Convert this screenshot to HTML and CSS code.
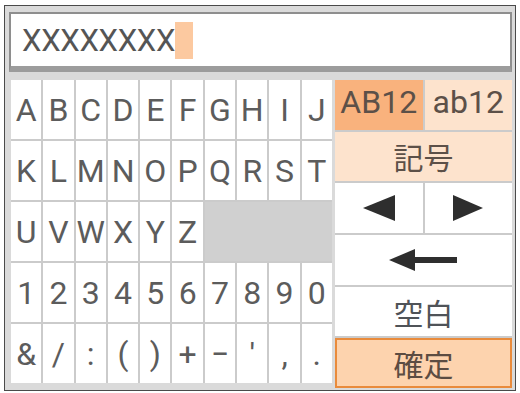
FILE: index.html
```html
<!DOCTYPE html>
<html lang="ja">
<head>
    <meta charset="UTF-8">
    <meta name="viewport" content="width=device-width, initial-scale=1.0">
    <title>文字入力</title>
    <link rel="stylesheet" href="styles.css">
</head>
<body>
<div class="screen">
    <div class="display">
        <span class="entry">XXXXXXXX</span><span class="caret"></span>
    </div>

    <div class="keyboard">
        <div class="letters">
            <div class="key">A</div>
            <div class="key">B</div>
            <div class="key">C</div>
            <div class="key">D</div>
            <div class="key">E</div>
            <div class="key">F</div>
            <div class="key">G</div>
            <div class="key">H</div>
            <div class="key">I</div>
            <div class="key">J</div>

            <div class="key">K</div>
            <div class="key">L</div>
            <div class="key">M</div>
            <div class="key">N</div>
            <div class="key">O</div>
            <div class="key">P</div>
            <div class="key">Q</div>
            <div class="key">R</div>
            <div class="key">S</div>
            <div class="key">T</div>

            <div class="key">U</div>
            <div class="key">V</div>
            <div class="key">W</div>
            <div class="key">X</div>
            <div class="key">Y</div>
            <div class="key">Z</div>
            <div class="key blank"></div>

            <div class="key">1</div>
            <div class="key">2</div>
            <div class="key">3</div>
            <div class="key">4</div>
            <div class="key">5</div>
            <div class="key">6</div>
            <div class="key">7</div>
            <div class="key">8</div>
            <div class="key">9</div>
            <div class="key">0</div>

            <div class="key">&amp;</div>
            <div class="key">/</div>
            <div class="key">:</div>
            <div class="key">(</div>
            <div class="key">)</div>
            <div class="key">+</div>
            <div class="key">&minus;</div>
            <div class="key">'</div>
            <div class="key">,</div>
            <div class="key">.</div>
        </div>

        <div class="side">
            <div class="side-row modes">
                <div class="key mode active">AB12</div>
                <div class="key mode">ab12</div>
            </div>
            <div class="key mode jp">記号</div>
            <div class="side-row">
                <div class="key">
                    <svg width="34" height="28" viewBox="0 0 34 28"><polygon points="1,14 33,1 33,27" fill="#2e2e2e"/></svg>
                </div>
                <div class="key">
                    <svg width="32" height="28" viewBox="0 0 32 28"><polygon points="31,14 1,1 1,27" fill="#2e2e2e"/></svg>
                </div>
            </div>
            <div class="key back">
                <svg width="70" height="24" viewBox="0 0 70 24"><polygon points="0,12 26,1 26,23" fill="#2e2e2e"/><rect x="22" y="9" width="46" height="6" fill="#2e2e2e"/></svg>
            </div>
            <div class="key jp space">空白</div>
            <div class="key jp confirm">確定</div>
        </div>
    </div>
</div>
</body>
</html>
```

FILE: styles.css
```css
html, body {
    margin: 0;
    padding: 0;
    background-color: #fff;
    font-family: Roboto, "Noto Sans", sans-serif;
}

.screen {
    box-sizing: border-box;
    width: 512px;
    height: 386px;
    margin: 5px 0 0 4px;
    padding: 6px 3px 0 4px;
    border: 1px solid #4a4a4a;
    background-color: #dadada;
}

.display {
    box-sizing: border-box;
    height: 60px;
    display: flex;
    align-items: center;
    padding-left: 11px;
    background-color: #fff;
    border: 2px solid #8e8e8e;
    border-bottom: 6px solid #9c9c9c;
}

.entry {
    font-size: 31px;
    color: #555;
    letter-spacing: -0.3px;
}

.caret {
    width: 18px;
    height: 37px;
    background-color: #fcc9a0;
}

.keyboard {
    display: flex;
    align-items: flex-start;
    gap: 3px;
    margin: 8px 0 0 2px;
}

.letters {
    width: 321px;
    display: grid;
    grid-template-columns: repeat(10, 1fr);
    grid-auto-rows: 59px;
    gap: 2px;
    background-color: #cbcbcb;
}

.key {
    display: flex;
    justify-content: center;
    align-items: center;
    background-color: #fff;
    color: #5c5c5c;
    font-size: 32px;
}

.letters .blank {
    grid-column: span 4;
    background-color: #d0d0d0;
}

.side {
    flex: 1;
    height: 308px;
    display: grid;
    grid-template-rows: repeat(6, 1fr);
    gap: 2px;
    background-color: #cbcbcb;
}

.side-row {
    display: grid;
    grid-template-columns: 1fr 1fr;
    gap: 2px;
}

.modes .key {
    padding-bottom: 6px;
}

.mode {
    background-color: #fde3cd;
    color: #5c5048;
}

.mode.active {
    background-color: #f9b27d;
}

.jp {
    font-family: "Noto Sans CJK JP", sans-serif;
    font-size: 30px;
}

.space {
    padding-top: 2px;
    color: #4f5358;
}

.confirm {
    box-sizing: border-box;
    border: 2px solid #e98b3c;
    background-color: #fdd3ae;
    color: #5c4c42;
}
```
